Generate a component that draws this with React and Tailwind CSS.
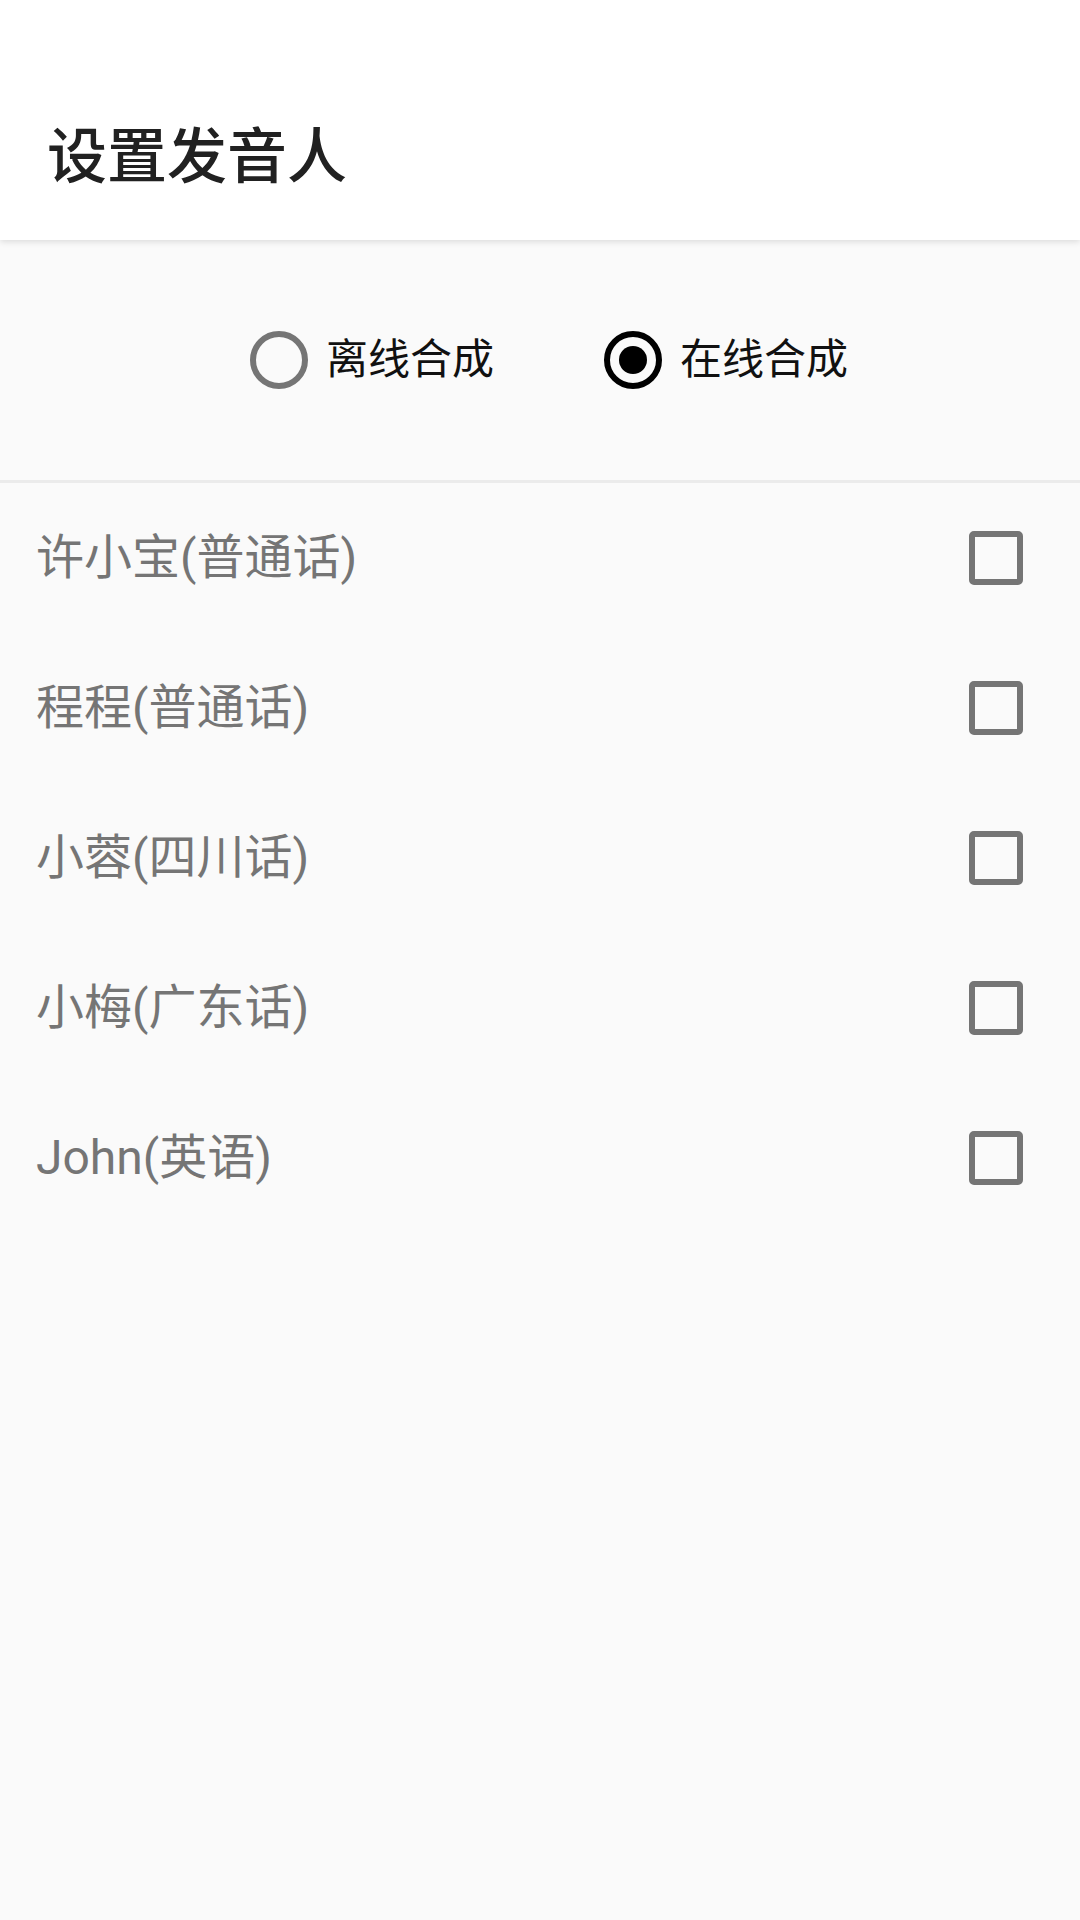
import { useState } from 'react'

const voices = ['许小宝(普通话)', '程程(普通话)', '小蓉(四川话)', '小梅(广东话)', 'John(英语)']

export default function App() {
  const [mode, setMode] = useState('online')
  const [picked, setPicked] = useState([])

  const toggle = (v) =>
    setPicked(picked.includes(v) ? picked.filter((p) => p !== v) : [...picked, v])

  return (
    <div className="min-h-[1920px] bg-[#fafafa] font-['Roboto','Noto_Sans_CJK_SC',sans-serif]">
      <header className="relative z-10 h-[240px] bg-white pt-[76px] shadow-[0_2px_6px_rgba(0,0,0,0.12)]">
        <div className="flex h-[164px] items-center pl-[47px]">
          <h1 className="text-[60px] leading-none font-medium text-[#212121]">设置发音人</h1>
        </div>
      </header>

      <div className="flex h-[240px] items-center pl-[250px]">
        <Radio label="离线合成" checked={mode === 'offline'} onClick={() => setMode('offline')} />
        <div className="ml-[110px]">
          <Radio label="在线合成" checked={mode === 'online'} onClick={() => setMode('online')} />
        </div>
      </div>
      <div className="h-[3px] bg-[#ebebeb]" />

      <ul>
        {voices.map((v) => (
          <li key={v} onClick={() => toggle(v)} className="flex h-[150px] items-center justify-between pl-[36px] pr-[57px]">
            <span className="text-[48px] leading-none text-[#757575]">{v}</span>
            <span className="flex h-[54px] w-[54px] items-center justify-center rounded-[5px] border-[6px] border-[#757575]">
              {picked.includes(v) && <span className="h-[22px] w-[22px] bg-[#757575]" />}
            </span>
          </li>
        ))}
      </ul>
    </div>
  )
}

function Radio({ label, checked, onClick }) {
  return (
    <button onClick={onClick} className="flex items-center gap-[18px]">
      <span className={`flex h-[58px] w-[58px] items-center justify-center rounded-full border-[6px] ${checked ? 'border-black' : 'border-[#757575]'}`}>
        {checked && <span className="h-[28px] w-[28px] rounded-full bg-black" />}
      </span>
      <span className="text-[42px] leading-none text-[#111]">{label}</span>
    </button>
  )
}
